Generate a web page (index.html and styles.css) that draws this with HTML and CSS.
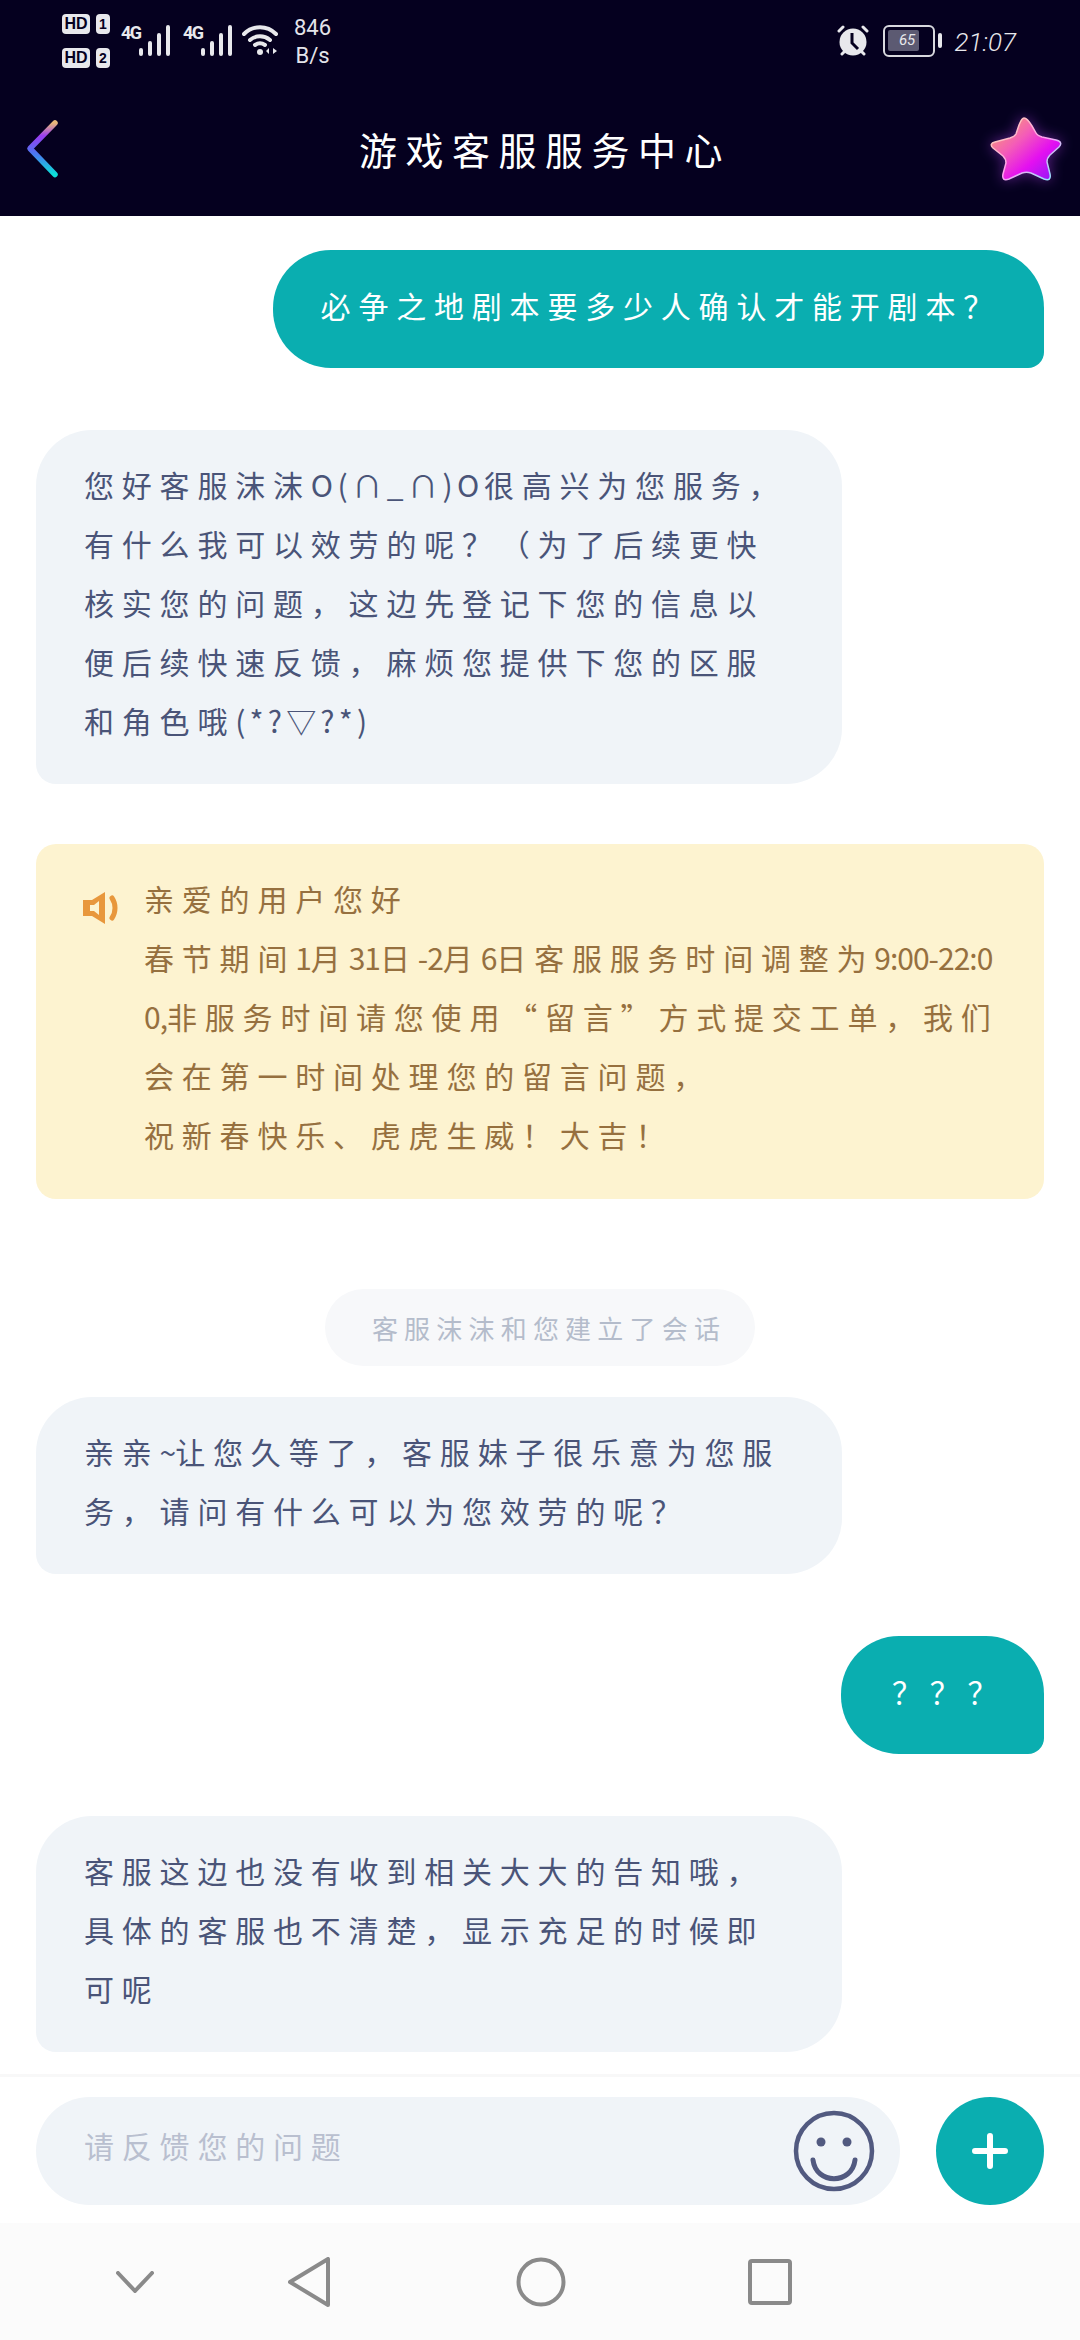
FILE: index.html
```html
<!DOCTYPE html>
<html lang="zh-CN">
<head>
    <meta charset="UTF-8">
    <title>游戏客服服务中心</title>
    <link rel="stylesheet" href="styles.css">
</head>
<body>
<div class="page">
    <div class="top">
        <div class="status">
            <div class="status-left">
                <div class="sims">
                    <div class="sim"><span class="hd">HD</span><span class="num">1</span></div>
                    <div class="sim"><span class="hd">HD</span><span class="num">2</span></div>
                </div>
                <div class="signal">
                    <span class="net">4G</span>
                    <svg class="bars" viewBox="0 0 32 31"><path d="M2 25v4M11 18v11M20 10v19M29 2v27" /></svg>
                </div>
                <div class="signal">
                    <span class="net">4G</span>
                    <svg class="bars" viewBox="0 0 32 31"><path d="M2 25v4M11 18v11M20 10v19M29 2v27" /></svg>
                </div>
                <svg class="wifi" viewBox="0 0 38 32">
                    <path class="arc" d="M2 10C11 1 25 1 34 10M8 16c6-5 14-5 20 0M13 21c3-2 7-2 10 0" />
                    <circle cx="18" cy="28" r="3" fill="#e8e8ec" />
                    <path d="M27 24v6l-3-3zM31 24v6l4-3z" fill="#e8e8ec" />
                </svg>
                <div class="speed">846<br>B/s</div>
            </div>
            <div class="status-right">
                <svg class="alarm" viewBox="0 0 32 32">
                    <circle cx="16" cy="17" r="13.500" fill="#e8e8ec" />
                    <path d="M15 8v10l6 6" fill="none" stroke="#05001f" stroke-width="3" />
                    <path d="M2 6l4-4M30 6l-4-4M5 29l2-2M27 29l-2-2" stroke="#e8e8ec" stroke-width="3" stroke-linecap="round" />
                </svg>
                <div class="battery"><div class="level">65</div></div>
                <div class="nub"></div>
                <div class="clock">21:07</div>
            </div>
        </div>
        <div class="titlebar">
            <svg class="back" viewBox="0 0 34 60">
                <defs>
                    <linearGradient id="backGrad" x1="0" y1="0" x2="0" y2="1">
                        <stop offset="0" stop-color="#e8b878" />
                        <stop offset=".25" stop-color="#9a3cf0" />
                        <stop offset=".6" stop-color="#4a78f0" />
                        <stop offset="1" stop-color="#0ce0d8" />
                    </linearGradient>
                </defs>
                <path d="M29 4L4 29.500 29 55.500" fill="none" stroke="url(#backGrad)" stroke-width="5.500" stroke-linecap="round" stroke-linejoin="round" />
            </svg>
            <h1 class="title">游戏客服服务中心</h1>
            <svg class="star" viewBox="-2 -2 76 68">
                <defs>
                    <linearGradient id="starGrad" x1="0" y1="0" x2="1" y2="1">
                        <stop offset="0" stop-color="#f8b060" />
                        <stop offset=".38" stop-color="#f45cb8" />
                        <stop offset=".65" stop-color="#e410f0" />
                        <stop offset="1" stop-color="#8418f8" />
                    </linearGradient>
                    <linearGradient id="rimGrad" x1="0" y1="0" x2="1" y2="1">
                        <stop offset="0" stop-color="#ffd8a0" />
                        <stop offset=".55" stop-color="#ffa0f0" />
                        <stop offset="1" stop-color="#80f0ff" />
                    </linearGradient>
                </defs>
                <path d="M34 1C37 1 39 4 42 9L46 16C47 18 49 19 52 20L66 23C71 24 72 27 69 30L60 38C58 40 57 42 57 45L60 57C61 62 59 64 54 62L41 56C38 55 35 55 32 56L19 62C14 64 12 62 13 57L16 46C16 43 15 41 13 39L3 31C0 28 1 26 5 25L20 21C23 20 25 19 26 17L29 8C31 3 32 1 34 1Z" fill="url(#starGrad)" stroke="url(#rimGrad)" stroke-width="1.500" />
            </svg>
        </div>
    </div>

    <div class="chat">
        <div class="bubble mine first">必争之地剧本要多少人确认才能开剧本？</div>

        <div class="bubble theirs">您好客服沫沫<span class="face">O(∩_∩)O</span>很高兴为您服务，<br>有什么我可以效劳的呢？（为了后续更快<br>核实您的问题，这边先登记下您的信息以<br>便后续快速反馈，麻烦您提供下您的区服<br>和角色哦<span class="face tight">(*?▽?*)</span></div>

        <div class="notice">
            <svg class="horn" viewBox="0 0 36 32">
                <path d="M0 8h9l13-8v32L9 24H0z M7 13v6h4l5 4V9l-5 4z" fill="#e8973c" fill-rule="evenodd" />
                <path d="M29 6c4 6 4 14 0 20" fill="none" stroke="#e8973c" stroke-width="5" stroke-linecap="round" />
            </svg>
            <div class="notice-text">亲爱的用户您好<br>春节期间<span class="latin">1</span>月<span class="latin">31</span>日<span class="latin">-2</span>月<span class="latin">6</span>日客服服务时间调整为<span class="latin">9:00-22:0</span><br><span class="latin">0,</span>非服务时间请您使用“留言”方式提交工单，我们<br>会在第一时间处理您的留言问题，<br>祝新春快乐、虎虎生威！大吉！</div>
        </div>

        <div class="chip">客服沫沫和您建立了会话</div>

        <div class="bubble theirs after-chip">亲亲<span class="latin">~</span>让您久等了，客服妹子很乐意为您服<br>务，请问有什么可以为您效劳的呢？</div>

        <div class="bubble mine short">？？？</div>

        <div class="bubble theirs">客服这边也没有收到相关大大的告知哦，<br>具体的客服也不清楚，显示充足的时候即<br>可呢</div>
    </div>

    <div class="composer">
        <div class="input">
            <span class="placeholder">请反馈您的问题</span>
            <svg class="smile" viewBox="0 0 82 82">
                <circle cx="41" cy="41" r="38" fill="none" stroke="#525a80" stroke-width="4.500" />
                <circle cx="28" cy="32" r="4.500" fill="#525a80" />
                <circle cx="54" cy="32" r="4.500" fill="#525a80" />
                <path d="M20 50c3 25 39 25 42 0" fill="none" stroke="#525a80" stroke-width="5" stroke-linecap="round" />
            </svg>
        </div>
        <div class="add">
            <svg class="plus" viewBox="0 0 36 36"><path d="M18 3v30M3 18h30" fill="none" stroke="#fff" stroke-width="6" stroke-linecap="round" /></svg>
        </div>
    </div>

    <div class="nav">
        <svg class="nav-down" viewBox="0 0 38 22"><path d="M2 2l17 18L36 2" /></svg>
        <svg class="nav-back" viewBox="0 0 42 50"><path d="M40 2v46L2 25z" /></svg>
        <svg class="nav-home" viewBox="0 0 50 50"><circle cx="25" cy="25" r="22.500" /></svg>
        <svg class="nav-recent" viewBox="0 0 44 46"><rect x="2" y="2" width="40" height="42" rx="2" /></svg>
    </div>
</div>
</body>
</html>
```

FILE: styles.css
```css
*{ margin: 0; padding: 0; box-sizing: border-box;}
html,body{ width: 1080px; height: 2340px; overflow: hidden;}
body{ font-family: "Noto Sans CJK SC", "Noto Sans", sans-serif; background: #fff;}
.page{ width: 1080px; height: 2340px; display: flex; flex-direction: column;}

/* top */
.top{ height: 216px; flex: none; background: #05001f; color: #e8e8ec;}
.status{ height: 74px; padding: 14px 64px 0 62px; display: flex; justify-content: space-between;}
.status-left{ display: flex; align-items: flex-start;}
.status-right{ display: flex; align-items: flex-start; padding-top: 11px;}
.sims{ width: 48px; display: flex; flex-direction: column; gap: 14px;}
.sim{ display: flex; gap: 6px; height: 20px;}
.hd,.num{ display: block; height: 20px; border-radius: 4px; background: #e8e8ec; color: #05001f;
    font: bold 16px/20px "Liberation Sans", sans-serif; text-align: center;}
.hd{ width: 28px;}
.num{ width: 14px; font-size: 14px;}
.signal{ display: flex; align-items: flex-start; margin: 11px 0 0 12px; width: 50px;}
.signal:nth-child(2){ margin-left: 11px;}
.net{ font: bold 18px/16px "Roboto", sans-serif; width: 18px; letter-spacing: -1.500px; flex: none;}
.bars{ width: 32px; height: 31px; flex: none;}
.bars path{ fill: none; stroke: #e8e8ec; stroke-width: 4; stroke-linecap: round;}
.wifi{ width: 38px; height: 32px; margin: 10px 0 0 9px; flex: none;}
.wifi .arc{ fill: none; stroke: #e8e8ec; stroke-width: 4; stroke-linecap: round;}
.speed{ margin-left: 14px; width: 37px; text-align: center; font: 22px/28px "Roboto", sans-serif; color: #e4e4ea;}
.alarm{ width: 32px; height: 32px; flex: none;}
.battery{ width: 52px; height: 32px; margin-left: 14px; border: 2.500px solid #d8d8de; border-radius: 6px; padding: 3px;}
.level{ width: 31px; height: 21px; background: #5c5a72; border-radius: 2px; color: #e8e8ec;
    font: italic 15px/21px "Roboto", sans-serif; text-align: center; padding-left: 8px;}
.nub{ width: 4px; height: 15px; margin: 8px 0 0 3px; background: #e8e8ec; border-radius: 2px;}
.clock{ margin-left: 13px; font: italic 300 26px/34px "Roboto", sans-serif; color: #e8e8ec;}

.titlebar{ height: 142px; padding: 8px 16px 0 26px; display: grid; grid-template-columns: 1fr auto 1fr; align-items: center;}
.back{ width: 34px; height: 60px;}
.title{ font-size: 38px; font-weight: 400; line-height: 50px; letter-spacing: 8.500px; color: #fff;}
.star{ width: 76px; height: 68px; justify-self: end; filter: drop-shadow(0 0 7px rgba(190,70,255,.45));}

/* chat */
.chat{ flex: 1; min-height: 0; overflow: hidden; padding: 34px 36px 0; display: flex; flex-direction: column;
    font-size: 30px; line-height: 59px; letter-spacing: 7.800px; white-space: nowrap;}
.latin{ letter-spacing: -1px;}
.face{ letter-spacing: 4.500px;}
.tight{ letter-spacing: 4.200px;}
.bubble{ padding: 25px 48px 34px; margin-top: 62px;}
.mine{ align-self: flex-end; padding: 26px 43px 33px 48px; background: #0aaeb0; color: #fff; border-radius: 58px 58px 16px 58px;}
.theirs{ width: 806px; background: #f0f4f8; color: #4a5478; border-radius: 56px 56px 56px 20px;}
.first{ margin-top: 0;}
.short{ width: 203px; padding-left: 51px;}
.after-chip{ margin-top: 31px;}
.notice{ margin-top: 60px; padding: 25px 30px 35px 47px; display: flex; align-items: flex-start; gap: 25px;
    background: #fdf3d0; color: #96703f; border-radius: 20px;}
.horn{ width: 36px; height: 32px; margin-top: 23px; flex: none;}
.chip{ align-self: center; margin-top: 90px; padding: 9px 29px 9px 47px; border-radius: 39px; background: #f7f8fa;
    color: #b4bccb; font-size: 26px; letter-spacing: 6.200px;}

/* composer */
.composer{ height: 149px; flex: none; padding: 20px 36px 0; border-top: 3px solid #f8f8f8; display: flex; gap: 36px;}
.input{ width: 864px; height: 108px; padding: 0 25px 0 48px; border-radius: 54px; background: #f0f4f8;
    display: flex; align-items: center; justify-content: space-between;}
.placeholder{ font-size: 30px; line-height: 44px; padding-bottom: 12px; letter-spacing: 7.800px; color: #b9bfcf;}
.smile{ width: 82px; height: 82px; flex: none;}
.add{ width: 108px; height: 108px; flex: none; border-radius: 50%; background: #0aaeb0;
    display: flex; align-items: center; justify-content: center;}
.plus{ width: 36px; height: 36px;}

/* nav */
.nav{ height: 117px; flex: none; background: #fbfbfb; display: flex; align-items: center; padding: 0 0 0 116px;}
.nav svg{ flex: none; fill: none; stroke: #8a8a8a; stroke-width: 4; stroke-linejoin: round; stroke-linecap: round;}
.nav-down{ width: 38px; height: 22px;}
.nav-back{ width: 42px; height: 50px; margin-left: 134px;}
.nav-home{ width: 50px; height: 50px; margin-left: 186px;}
.nav-recent{ width: 44px; height: 46px; margin-left: 182px;}
```
